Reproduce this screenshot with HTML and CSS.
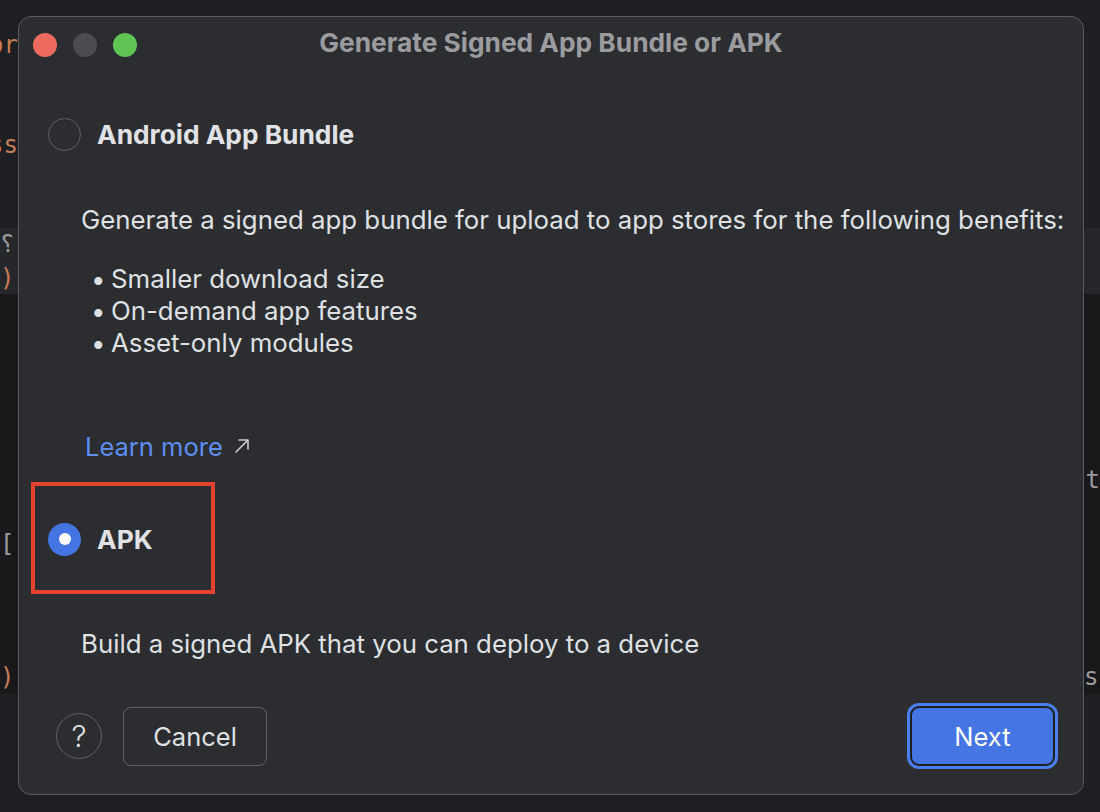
FILE: index.html
```html
<!DOCTYPE html>
<html>
<head>
<meta charset="utf-8">
<link rel="stylesheet" href="styles.css">
</head>
<body>
<div class="editor">
  <div class="line"><span class="l orange">or</span></div>
  <div class="line"><span class="l"></span></div>
  <div class="line"><span class="l"></span></div>
  <div class="line"><span class="l orange">ss</span></div>
  <div class="line"><span class="l"></span></div>
  <div class="line"><span class="l"></span></div>
  <div class="line band"><span class="l grey">&#x2e2e;</span></div>
  <div class="line band"><span class="l orange">(</span></div>
  <div class="line dark"><span class="l"></span></div>
  <div class="line dark"><span class="l"></span></div>
  <div class="line dark"><span class="l"></span></div>
  <div class="line dark"><span class="l"></span></div>
  <div class="line dark"><span class="l"></span></div>
  <div class="line dark shift"><span class="l"></span><span class="r end grey">nt</span></div>
  <div class="line dark"><span class="l"></span></div>
  <div class="line dark"><span class="l grey">]</span></div>
  <div class="line dark"><span class="l"></span></div>
  <div class="line dark"><span class="l"></span></div>
  <div class="line dark"><span class="l"></span></div>
  <div class="line dark"><span class="l orange">(</span><span class="r grey">su</span></div>
</div>

<div class="dialog">
  <div class="titlebar">
    <div class="lights">
      <span class="light red"></span>
      <span class="light gray"></span>
      <span class="light green"></span>
    </div>
    <div class="title">Generate Signed App Bundle or APK</div>
  </div>

  <div class="content">
    <div class="option first">
      <span class="radio"></span>
      <span class="opt-label">Android App Bundle</span>
    </div>
    <p class="desc bundle-desc">Generate a signed app bundle for upload to app stores for the following benefits:</p>
    <ul class="benefits">
      <li>Smaller download size</li>
      <li>On-demand app features</li>
      <li>Asset-only modules</li>
    </ul>
    <a class="learn">Learn more<svg class="arrow" width="16" height="16" viewBox="0 0 16 16"><path d="M2 14 L14 2 M5 2 H14 V11" fill="none" stroke="#c9cbd0" stroke-width="1.6" stroke-linecap="round" stroke-linejoin="round"/></svg></a>

    <div class="highlight">
      <div class="option">
        <span class="radio checked"></span>
        <span class="opt-label">APK</span>
      </div>
    </div>
    <p class="desc apk-desc">Build a signed APK that you can deploy to a device</p>
  </div>

  <div class="footer">
    <span class="help">?</span>
    <button class="btn cancel">Cancel</button>
    <span class="spacer"></span>
    <span class="focus-ring"><button class="btn primary">Next</button></span>
  </div>
</div>
</body>
</html>
```

FILE: styles.css
```css
html, body {
  margin: 0;
  padding: 0;
}
body {
  width: 1100px;
  height: 812px;
  background: #1e1f22;
  font-family: Inter, "Noto Sans", "Liberation Sans", sans-serif;
  overflow: hidden;
  position: relative;
}

/* background editor fragments */
.editor {
  display: flex;
  flex-direction: column;
  padding-top: 28px;
  font-family: "DejaVu Sans Mono", monospace;
  font-size: 24px;
}
.line {
  height: 33.3px;
  display: flex;
  align-items: center;
}
.line.shift { align-items: flex-end; }
.line.band { background: #26272a; }
.line.dark { background: #19191c; }
.line .l {
  width: 18px;
  overflow: hidden;
  white-space: nowrap;
  direction: rtl;
  text-align: left;
}
.line .r {
  margin-left: auto;
  width: 16px;
  overflow: hidden;
  white-space: nowrap;
}
.line .r.end { direction: rtl; }
.orange { color: #c77d55; }
.grey { color: #9a9ba0; }

/* dialog */
.dialog {
  position: absolute;
  left: 18px;
  top: 16px;
  width: 1066px;
  height: 779px;
  box-sizing: border-box;
  background: #2b2d30;
  border: 1.5px solid #5a5b5f;
  border-radius: 13px;
  display: flex;
  flex-direction: column;
  color: #dfe1e5;
}

.titlebar {
  height: 55px;
  display: flex;
  align-items: center;
  position: relative;
  flex: none;
}
.lights {
  display: flex;
  gap: 16px;
  padding-left: 14px;
}
.light {
  width: 24px;
  height: 24px;
  border-radius: 50%;
  display: block;
}
.light.red { background: #ec6a5e; }
.light.gray { background: #4b4c4f; }
.light.green { background: #5fc454; }
.title {
  position: absolute;
  left: 0;
  right: 0;
  top: 11px;
  text-align: center;
  font-weight: 700;
  font-size: 26.3px;
  line-height: 30px;
  color: #9b9c9f;
  pointer-events: none;
}

.content {
  flex: 1;
  padding-left: 12px;
}
.option {
  display: flex;
  align-items: center;
  gap: 16px;
  padding-left: 17px;
  height: 40px;
}
.option.first { margin-top: 42px; }
.radio {
  width: 33px;
  height: 33px;
  box-sizing: border-box;
  border-radius: 50%;
  border: 1.6px solid #5e5f63;
  display: flex;
  align-items: center;
  justify-content: center;
  flex: none;
}
.radio.checked {
  background: #4574e3;
  border: none;
}
.radio.checked::after {
  content: "";
  width: 12px;
  height: 12px;
  border-radius: 50%;
  background: #ffffff;
}
.opt-label {
  font-weight: 700;
  font-size: 26.3px;
  color: #e0e2e6;
}

.desc {
  margin: 0;
  padding-left: 50px;
  font-size: 25.8px;
  color: #dfe1e5;
  line-height: 32px;
  white-space: nowrap;
}
.bundle-desc { margin-top: 50px; }

.benefits {
  list-style: none;
  margin: 27px 0 0 0;
  padding-left: 60px;
  font-size: 25.8px;
  line-height: 32px;
  color: #dfe1e5;
}
.benefits li::before {
  content: "\2022";
  display: inline-block;
  width: 20px;
}

.learn {
  display: flex;
  align-items: center;
  width: fit-content;
  margin-top: 72px;
  margin-left: 54px;
  font-size: 25.5px;
  line-height: 32px;
  color: #5d8ef0;
}
.arrow {
  margin-left: 11px;
  margin-top: -2px;
}

.highlight {
  margin-top: 19px;
  width: 184px;
  height: 112px;
  flex: none;
  box-sizing: border-box;
  border: 4px solid #e5432d;
  display: flex;
  align-items: center;
}
.highlight .option {
  padding-left: 13px;
  margin-top: 2px;
}

.apk-desc {
  margin-top: 34px;
}

.footer {
  flex: none;
  height: 87px;
  display: flex;
  align-items: flex-start;
  padding: 0 25px 0 37px;
  box-sizing: border-box;
}
.help {
  width: 46px;
  height: 46px;
  box-sizing: border-box;
  border-radius: 50%;
  border: 1.5px solid #5e5f63;
  display: flex;
  align-items: center;
  justify-content: center;
  font-size: 30px;
  font-weight: 300;
  color: #dfe1e5;
  margin-top: 6px;
}
.btn {
  font-family: Inter, "Noto Sans", "Liberation Sans", sans-serif;
  font-size: 25.5px;
  height: 59px;
  border-radius: 8px;
  box-sizing: border-box;
  cursor: default;
}
.cancel {
  margin-left: 21px;
  width: 144px;
  background: transparent;
  border: 1.5px solid #5e5f63;
  color: #dfe1e5;
}
.spacer { flex: 1; }
.focus-ring {
  display: flex;
  margin-top: -4px;
  padding: 3px;
  border-radius: 12px;
  background: #4a7ff0;
}
.primary {
  width: 145px;
  height: 60px;
  background: #4574e3;
  border: 2px solid #1e1f22;
  border-radius: 9px;
  color: #ffffff;
}
```
